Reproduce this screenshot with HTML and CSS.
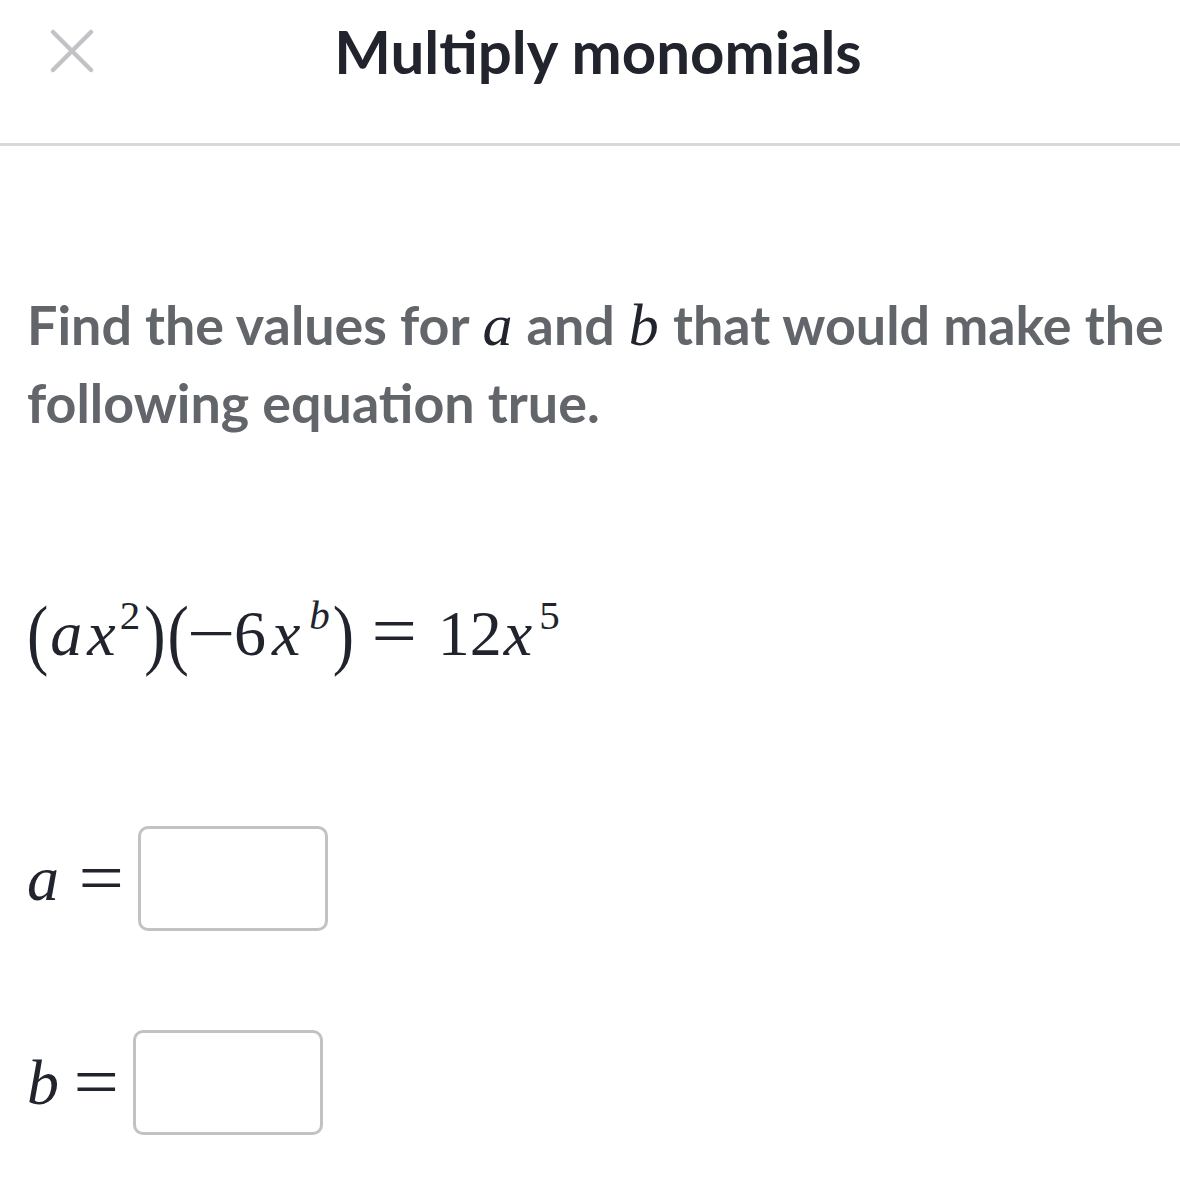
FILE: index.html
```html
<!DOCTYPE html>
<html>
<head>
<meta charset="utf-8">
<link rel="stylesheet" href="styles.css">
</head>
<body>
<header class="top">
  <div class="close">
    <svg width="46" height="46" viewBox="0 0 46 46"><path d="M4 4 L42 42 M42 4 L4 42" stroke="#c2c3c6" stroke-width="4.5" stroke-linecap="round" fill="none"/></svg>
  </div>
  <h1 class="title">Multiply monomials</h1>
  <div></div>
</header>
<main class="content">
  <p class="question">Find the values for <span class="mi qa">a</span> and <span class="mi qb">b</span> that would make the<br>following equation true.</p>
  <div class="equation"><span class="paren p1">(</span><span class="mi e-a">a</span><span class="mi e-x1">x</span><span class="sup s2">2</span><span class="paren p2">)</span><span class="paren p3">(</span><span class="minus">−</span><span class="six">6</span><span class="mi e-x2">x</span><span class="sup mi sb">b</span><span class="paren p4">)</span><span class="rel eq">=</span><span class="twelve">12</span><span class="mi e-x3">x</span><span class="sup s5">5</span></div>
  <div class="answer a-row"><span class="mi var">a</span><span class="rel">=</span><span class="box"></span></div>
  <div class="answer b-row"><span class="mi var">b</span><span class="rel">=</span><span class="box"></span></div>
</main>
</body>
</html>
```
FILE: styles.css
```css
html, body {
  margin: 0;
  padding: 0;
  background: #ffffff;
}
body {
  font-family: Lato, "Noto Sans", sans-serif;
}
.top {
  display: grid;
  grid-template-columns: 1fr auto 1fr;
  align-items: center;
  height: 143px;
  border-bottom: 3px solid #d8d9db;
  padding-left: 16px;
  box-sizing: content-box;
}
.close {
  padding-left: 33px;
  padding-bottom: 41px;
  display: flex;
}
.title {
  margin: 0;
  font-size: 60px;
  font-weight: 700;
  color: #21242c;
  padding-bottom: 42px;
}
.content {
  padding-left: 27px;
}
.question {
  margin: 140px 0 0 0;
  font-size: 53.8px;
  line-height: 77px;
  font-weight: 700;
  color: #626569;
}
.mi {
  font-family: "Liberation Serif", "DejaVu Serif", serif;
  font-style: italic;
  font-weight: 400;
  color: #21242c;
}
.question .mi {
  font-size: 60px;
}
.qa, .qb {
  margin: 0 1px;
}
.equation {
  margin-top: 152px;
  font-family: "Liberation Serif", "DejaVu Serif", serif;
  font-size: 64px;
  line-height: 77px;
  color: #21242c;
  white-space: nowrap;
}
.equation > span {
  display: inline-block;
}
.sup {
  font-size: 41px;
  line-height: 0;
  vertical-align: 26px;
}
.paren {
  transform: scaleY(1.22);
}
.e-a { margin-left: 2px; }
.e-x1 { margin-left: 5px; }
.s2 { margin-left: 4px; }
.p2 { margin-left: 4px; }
.p3 { margin-left: 2px; }
.minus {
  margin-left: 4px;
  transform: scaleX(1.35);
}
.six { margin-left: 5px; }
.e-x2 { margin-left: 6px; }
.sb { margin-left: 9px; }
.p4 { margin-left: 3px; }
.rel {
  transform: scaleX(1.12);
}
.eq {
  font-size: 72px;
  margin-left: 20px;
  margin-right: 23px;
}
.e-x3 { margin-left: 2px; }
.s5 { margin-left: 7px; }
.answer {
  display: flex;
  align-items: center;
  font-family: "Liberation Serif", "DejaVu Serif", serif;
  font-size: 64px;
  color: #21242c;
}
.answer .rel {
  font-size: 72px;
  margin: 0 16px 0 22px;
}
.a-row .var {
  margin-right: 0;
}
.b-row .var {
  margin-right: -5px;
}
.a-row {
  margin-top: 154px;
}
.b-row {
  margin-top: 99px;
}
.box {
  display: block;
  width: 184px;
  height: 99px;
  border: 3px solid #c2c2c2;
  border-radius: 10px;
}
```
